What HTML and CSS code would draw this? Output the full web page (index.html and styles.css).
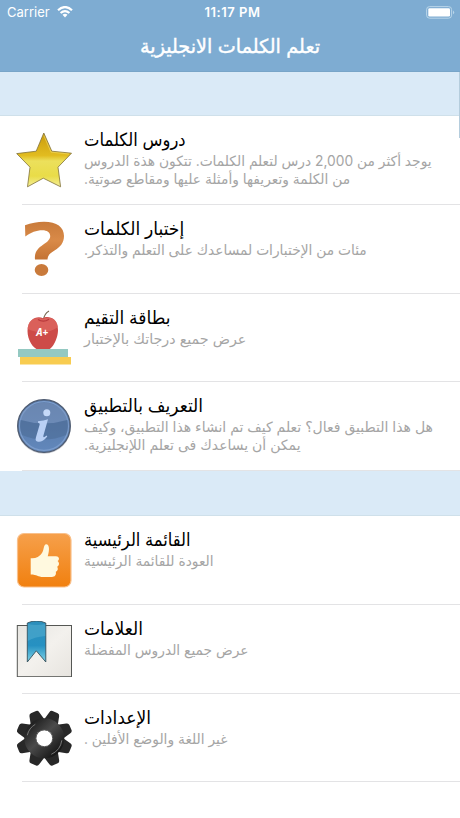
FILE: index.html
```html
<!DOCTYPE html><html lang="ar"><head><meta charset="utf-8"/>
<meta name="viewport" content="width=device-width, initial-scale=1.0"/>
<title>تعلم الكلمات الانجليزية</title>
<link rel="stylesheet" href="styles.css">
</head>
<body>

<header class="top">
  <div class="status">
    <div class="carrier">
      <span>Carrier</span>
      <svg class="wifi" width="16" height="12" viewBox="0 0 16 12" fill="none" stroke="#fff" stroke-width="2.2">
        <path d="M1 4.2Q8-2.1 15 4.2M3.6 7Q8 3.1 12.4 7"/>
        <path d="M5.5 8.8Q8 6.7 10.5 8.8L8 11.4Z" fill="#fff" stroke="none"/>
      </svg>
    </div>
    <b class="clock">11:17 PM</b>
    <svg class="battery" width="29" height="13" viewBox="0 0 29 13">
      <rect x=".6" y=".6" width="25" height="11.6" rx="3" fill="none" stroke="#b9d6e9"/>
      <rect x="2.3" y="2.2" width="21.7" height="8.4" rx="1.4" fill="#fff"/>
      <path d="M27 4.5q2.4 1.9 0 3.8z" fill="#b9d6e9"/>
    </svg>
  </div>
  <h1 class="title" dir="rtl">تعلم الكلمات الانجليزية</h1>
</header>

<main class="list">
  <div class="band"></div>
  <section class="group">
    <div class="row">
      <svg class="icon" viewBox="0 0 56 56">
        <defs><linearGradient id="gold" x2="0" y2="1"><stop stop-color="#c99a0c"/><stop offset=".42" stop-color="#e2bc20"/><stop offset=".52" stop-color="#ece05c"/><stop offset=".8" stop-color="#e9dc48"/><stop offset="1" stop-color="#f5ef9a"/></linearGradient></defs>
        <path d="M27.8 1L35.8 19.2L55.5 21.2L42 35.2L44.6 54.8L27.3 46.2L11.5 54.8L14 35.2L.7 21.6L20.2 19.2Z" fill="url(#gold)" stroke="#80713a" stroke-width=".8"/>
        <path d="M27.8 3.5L35 20.1L53 22" fill="none" stroke="#f3dc69" stroke-width=".6"/>
      </svg>
      <div class="text" dir="rtl">
        <h2 class="name tight">دروس الكلمات</h2>
        <p class="note">يوجد أكثر من 2,000 درس لتعلم الكلمات. تتكون هذة الدروس<br>من الكلمة وتعريفها وأمثلة عليها ومقاطع صوتية.</p>
      </div>
    </div>
    <div class="row">
      <svg class="icon" viewBox="0 0 56 56">
        <defs><linearGradient id="copper" x2="0" y2="1"><stop stop-color="#c97b3b"/><stop offset=".5" stop-color="#d98a48"/><stop offset="1" stop-color="#c47334"/></linearGradient></defs>
        <path d="M9 4.2Q18 .7 28 .7C41 .7 48 6.2 48 15C48 22 44 26.3 38.5 29.5C33.5 32.4 31.8 34.6 31.5 38.6H19C18.2 31.5 21.5 27.5 27 23.8C32 20.5 34.2 18.2 34.2 15C34.2 11.3 30.8 9.2 26.5 9.2C20 9.2 15.3 11.4 9.3 15.5Z" fill="url(#copper)"/>
        <ellipse cx="25.5" cy="49" rx="6.8" ry="6" fill="#c97a3b"/>
      </svg>
      <div class="text" dir="rtl">
        <h2 class="name">إختبار الكلمات</h2>
        <p class="note">مئات من الإختبارات لمساعدك على التعلم والتذكر.</p>
      </div>
    </div>
    <div class="row">
      <svg class="icon" viewBox="0 0 56 56">
        <path d="M27.5 10Q28 4 33 1" fill="none" stroke="#776750" stroke-width="1.1"/>
        <path d="M27 8.2C31 5.5 42 7 42 20C42 29 36 39.8 31.5 39.8H22.5C17 38.5 11.5 30 11.5 21C11.5 8 22 5.5 27 8.2Z" fill="#cd4b48"/>
        <path d="M11.7 19C20 23.5 34 23.5 41.9 17C41 8 32 6 27 9.2C21 6 12 8.5 11.7 19Z" fill="#df6a62" opacity=".7"/>
        <path d="M22 9.5Q27.5 13 33 9.2" fill="none" stroke="#b9393b" stroke-width="1.3"/>
        <text class="grade" x="20.2" y="26.2">A+</text>
        <path d="M2 39H52V47H2Z" fill="#94c9c2"/>
        <path d="M4 47H55V54.6H4Z" fill="#f8cc50"/>
      </svg>
      <div class="text" dir="rtl">
        <h2 class="name">بطاقة التقيم</h2>
        <p class="note wide">عرض جميع درجاتك بالإختبار</p>
      </div>
    </div>
    <div class="row">
      <svg class="icon" viewBox="0 0 56 56">
        <defs><linearGradient id="blue" x2="0" y2="1"><stop stop-color="#5574a1"/><stop offset="1" stop-color="#6288bc"/></linearGradient></defs>
        <circle cx="28" cy="29" r="26.8" fill="#c9cbd0"/>
        <circle cx="28" cy="28" r="26.3" fill="url(#blue)" stroke="#4e5b70" stroke-width="1.3"/>
        <circle cx="28" cy="28" r="24.4" fill="none" stroke="#7c9dcc" stroke-width="1.2"/>
        <path d="M4.500 22Q5 10 18 6.500Q28 2.500 38 6.500Q51 11 51.500 22Q28 29 4.500 22Z" fill="#7d98c0" opacity=".5"/>
        <path d="M4.500 22Q28 29 51.500 22A24 24 0 0 1 50 37Q28 46 6 37A24 24 0 0 1 4.500 22Z" fill="#48658f" opacity=".45"/>
        <circle cx="30.8" cy="14.8" r="3.5" fill="#c5d9f8"/>
        <path d="M22 23.2Q28 22.8 32 21.2L27.3 38Q27 40.5 30.5 37.5L31.3 38.5Q26.5 44.5 22 43.8Q18.8 43.3 19.9 39.5L23.7 26.5Q24 24.7 22 24.7Z" fill="#b9d0f5"/>
      </svg>
      <div class="text" dir="rtl">
        <h2 class="name">التعريف بالتطبيق</h2>
        <p class="note full">هل هذا التطبيق فعال؟ تعلم كيف تم انشاء هذا التطبيق، وكيف<br>يمكن أن يساعدك فى تعلم اللإنجليزية.</p>
      </div>
    </div>
  </section>

  <div class="band"></div>
  <section class="group">
    <div class="row">
      <svg class="icon" viewBox="0 0 56 56">
        <defs><linearGradient id="orange" x2="0" y2="1"><stop stop-color="#f6a04b"/><stop offset="1" stop-color="#f1800f"/></linearGradient></defs>
        <rect x="1.5" y="1.5" width="53.5" height="53.5" rx="6.5" fill="url(#orange)" stroke="#f9c08b" stroke-width="1.2"/>
        <path d="M14.7 26.3Q22 27 26 21C28 18 27.5 12.3 30.2 12.2C33.5 12.2 33.7 18 31.7 24.2H40C43.2 24.2 44 27.5 41.6 29.1C44 31.2 43 34 41.2 34.7C42.6 37.5 41.3 39 39.8 39.8C40.5 43 38.8 45 36 45H27C22 45 21 42.5 14.7 42.5Z" fill="#fff9df"/>
      </svg>
      <div class="text" dir="rtl">
        <h2 class="name tight">القائمة الرئيسية</h2>
        <p class="note">العودة للقائمة الرئيسية</p>
      </div>
    </div>
    <div class="row">
      <svg class="icon" viewBox="0 0 56 56">
        <defs>
          <linearGradient id="ribbon" x2="0" y2="1"><stop stop-color="#2d8fbb"/><stop offset=".6" stop-color="#2691c2"/><stop offset="1" stop-color="#7fd4e7"/></linearGradient>
          <linearGradient id="paper" x2="1" y2="1"><stop stop-color="#e6e5e1"/><stop offset=".5" stop-color="#f3f1ed"/><stop offset="1" stop-color="#e7e4df"/></linearGradient>
        </defs>
        <rect x="1.3" y="4.5" width="54.2" height="51.2" fill="url(#paper)" stroke="#555754"/>
        <path d="M11.3 2Q20.5-2.2 29.8 2V41L20.3 29.8L11.3 41Z" fill="url(#ribbon)" stroke="#34505c" stroke-width=".9"/>
        <path d="M11.8 3Q20.5 5 29.3 3V15Q18 16 11.8 20Z" fill="#64b9d8" opacity=".4"/>
      </svg>
      <div class="text" dir="rtl">
        <h2 class="name">العلامات</h2>
        <p class="note">عرض جميع الدروس المفضلة</p>
      </div>
    </div>
    <div class="row">
      <svg class="icon" viewBox="0 0 56 56">
        <defs>
          <linearGradient id="coal" x2="1" y2="1"><stop stop-color="#1f1f1f"/><stop offset=".45" stop-color="#4b4b4b"/><stop offset="1" stop-color="#161616"/></linearGradient>
          <path id="tooth" d="M-7.5-17L-5.3-26Q-4.8-28.3 -2.8-28.3H2.8Q4.8-28.3 5.3-26L7.5-17Z"/>
        </defs>
        <g transform="translate(28.3 28.3)">
          <g fill="#282828">
            <use href="#tooth" transform="rotate(22.5)"/><use href="#tooth" transform="rotate(67.5)"/>
            <use href="#tooth" transform="rotate(112.5)"/><use href="#tooth" transform="rotate(157.5)"/>
            <use href="#tooth" transform="rotate(202.5)"/><use href="#tooth" transform="rotate(247.5)"/>
            <use href="#tooth" transform="rotate(292.5)"/><use href="#tooth" transform="rotate(337.5)"/>
          </g>
          <circle r="14" fill="none" stroke="url(#coal)" stroke-width="12"/>
          <path d="M-17-3A17 17 0 0 1-9-14M17.5 2A18 18 0 0 1 7 16" fill="none" stroke="#777" stroke-width="1"/>
          <circle r="8.4" fill="#fff" stroke="#555"/>
        </g>
      </svg>
      <div class="text" dir="rtl">
        <h2 class="name">الإعدادات</h2>
        <p class="note">غير اللغة والوضع الأفلين .</p>
      </div>
    </div>
  </section>
  <div class="scroll"></div>
</main>

</body>
</html>
```
FILE: styles.css
```css
body {
  margin: 0;
  height: 818px;
  overflow: hidden;
  background: #fff;
  font-family: Inter, "DejaVu Sans", sans-serif;
}
.top {
  height: 71px;
  background: #7eacd2;
  border-bottom: 1px solid #78a5c8;
  color: #fff;
}
/* status bar */
.status {
  display: grid;
  grid-template-columns: 1fr auto 1fr;
  align-items: center;
  height: 24px;
  padding: 0 5px 0 7px;
  font-size: 13px;
}
.carrier {
  display: flex;
  align-items: center;
  gap: 7px;
}
.clock {
  padding-left: 3px;
  font-weight: 600;
  letter-spacing: .5px;
}
.battery {
  justify-self: end;
}
.title {
  margin: 0;
  font-size: 19.2px;
  font-weight: normal;
  line-height: 44px;
  text-align: center;
  -webkit-text-stroke: .4px #fff;
}
/* rows */
.list {
  position: relative;
}
.band {
  height: 43px;
  background: #daeaf7;
  border-bottom: 1px solid #cfe0ea;
}
.group + .band {
  height: 44px;
}
.row {
  position: relative;
  display: flex;
  gap: 12px;
  height: 88.75px;
  padding: 16px 0 0 16px;
  box-sizing: border-box;
}
.row::after {
  content: "";
  position: absolute;
  left: 22px;
  right: 0;
  bottom: 0;
  border-bottom: 1px solid #e3e3e5;
}
.icon {
  width: 56px;
  height: 56px;
  flex: none;
}
.text {
  text-align: left;
  white-space: nowrap;
}
.name {
  margin: -4px 0 0;
  color: #000;
  font-size: 18px;
  font-weight: normal;
  line-height: 24px;
  transform: scaleX(.95);
  transform-origin: left;
}
.tight {
  transform: scaleX(.91);
}
.note {
  margin: 0;
  color: #a5a5a5;
  font-size: 14px;
  line-height: 17.5px;
  transform: scaleX(.985);
  transform-origin: left;
}
.wide {
  transform: scaleX(1.02);
}
.full {
  transform: none;
}
.grade {
  font: italic bold 10px "Open Sans", sans-serif;
  fill: #fff;
}
.scroll {
  position: absolute;
  top: 0;
  right: 0;
  width: 1px;
  height: 66px;
  background: #b5cddd;
}
```
